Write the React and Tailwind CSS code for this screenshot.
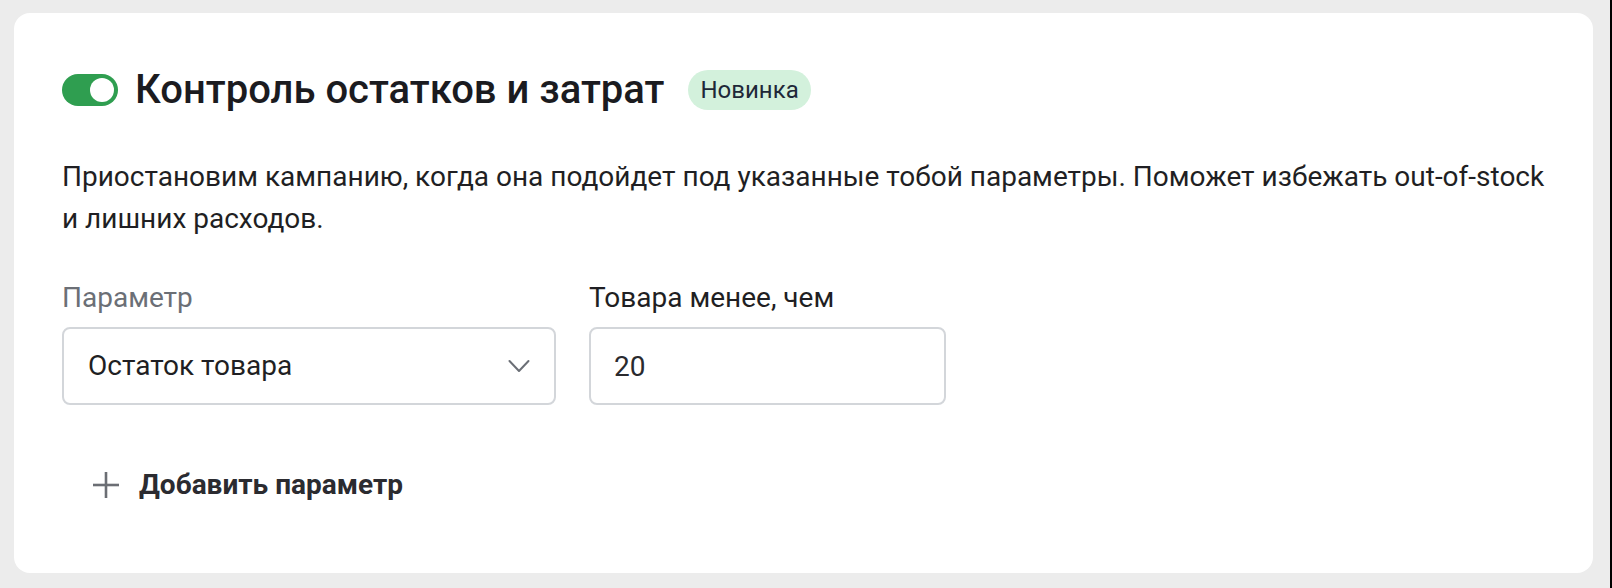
import { useState } from 'react';

function Toggle({ on, onChange }) {
    return (
        <button
            onClick={() => onChange(!on)}
            className={`flex h-[32px] w-[56px] shrink-0 items-center rounded-full p-[4px] ${on ? 'justify-end bg-[#2f9e50]' : 'justify-start bg-[#c4c8cc]'}`}
        >
            <span className="block h-[24px] w-[24px] rounded-full bg-white" />
        </button>
    );
}

export default function App() {
    const [enabled, setEnabled] = useState(true);
    const [amount, setAmount] = useState('20');

    return (
        <div className="flex min-h-screen bg-[#ececec] font-['Roboto',sans-serif]">
            <div className="flex-1 pb-[15px] pl-[14px] pr-[17px] pt-[13px]">
                <div className="h-[560px] rounded-[16px] bg-white px-[48px] pt-[57px]">
                    {/* Header */}
                    <div className="flex h-[40px] items-center">
                        <Toggle on={enabled} onChange={setEnabled} />
                        <h2 className="ml-[17px] text-[40px] font-medium leading-[44px] text-[#1b1b1f]">
                            Контроль остатков и затрат
                        </h2>
                        <span className="ml-[24px] flex h-[40px] items-center rounded-full bg-[#d3f1dc] px-[12px] text-[24px] text-[#1e2838]">
                            Новинка
                        </span>
                    </div>

                    <p className="mt-[46px] max-w-[1490px] text-[28px] leading-[42px] text-[#1f1f23]">
                        Приостановим кампанию, когда она подойдет под указанные тобой параметры. Поможет избежать out-of-stock и лишних расходов.
                    </p>

                    {/* Fields */}
                    <div className="mt-[42px] flex gap-[33px]">
                        <div className="flex w-[494px] flex-col">
                            <label className="text-[28px] leading-[32px] text-[#6b6f76]">Параметр</label>
                            <button className="mt-[13px] flex h-[78px] items-center justify-between rounded-[8px] border-2 border-[#d3d6da] pl-[24px] pr-[24px] text-[28px] text-[#1f1f23]">
                                <span>Остаток товара</span>
                                <svg width="22" height="14" viewBox="0 0 22 14" fill="none" stroke="#6b6f76" strokeWidth="2" strokeLinecap="round" strokeLinejoin="round">
                                    <polyline points="1.5,2 11,12 20.5,2" />
                                </svg>
                            </button>
                        </div>
                        <div className="flex w-[357px] flex-col">
                            <label className="text-[28px] leading-[32px] text-[#1f1f23]">Товара менее, чем</label>
                            <input
                                value={amount}
                                onChange={(e) => setAmount(e.target.value)}
                                className="mt-[13px] h-[78px] rounded-[8px] border-2 border-[#d3d6da] px-[23px] text-[28px] text-[#2a2a2e] outline-none"
                            />
                        </div>
                    </div>

                    <button className="ml-[30px] mt-[56px] flex h-[48px] items-center gap-[19px] text-[28px] font-bold text-[#2b2b30]">
                        <svg width="28" height="28" viewBox="0 0 28 28" fill="none" stroke="#6b6e74" strokeWidth="2.6">
                            <line x1="14" y1="1" x2="14" y2="27" />
                            <line x1="1" y1="14" x2="27" y2="14" />
                        </svg>
                        <span>Добавить параметр</span>
                    </button>
                </div>
            </div>
            <div className="w-[2px] bg-black" />
        </div>
    );
}
